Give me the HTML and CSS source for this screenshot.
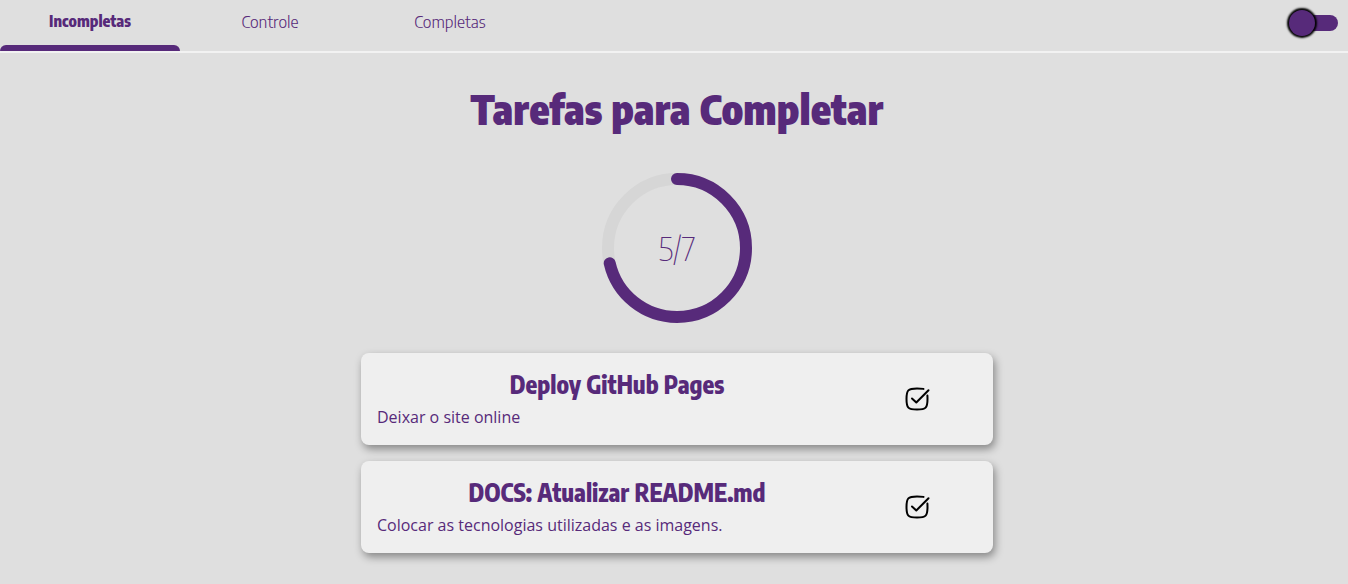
FILE: index.html
```html
<!DOCTYPE html>
<html lang="pt-BR">
<head>
<meta charset="utf-8">
<meta name="viewport" content="width=device-width, initial-scale=1">
<title>Tarefas</title>
<link rel="stylesheet" href="styles.css">
</head>
<body>
<header class="topbar">
  <nav class="tabs">
    <a class="tab tab-active" href="#incompletas" aria-current="page">Incompletas</a>
    <a class="tab" href="#controle">Controle</a>
    <a class="tab" href="#completas">Completas</a>
  </nav>
  <input class="switch" type="checkbox" role="switch" aria-label="Tema escuro">
</header>
<main class="content">
  <h1 class="title">Tarefas para Completar</h1>
  <div class="progress">
    <svg class="ring" viewBox="0 0 150 150" aria-hidden="true">
      <circle class="ring-track" cx="75" cy="75" r="69"/>
      <circle class="ring-value" cx="75" cy="75" r="69" pathLength="7" stroke-dasharray="5 7" transform="rotate(-90 75 75)"/>
    </svg>
    <span class="count">5/7</span>
  </div>
  <ul class="tasks">
    <li class="task">
      <div class="task-text">
        <h2 class="task-title">Deploy GitHub Pages</h2>
        <p class="task-info">Deixar o site online</p>
      </div>
      <button class="done" type="button" aria-label="Completar Deploy GitHub Pages">
        <svg class="check" viewBox="0 0 26 26" aria-hidden="true"><path d="M19.500 2.900C18 2.500 16.500 2.500 13 2.500C4 2.500 2.500 4 2.500 13S4 23.500 13 23.500S23.500 22 23.500 13Q23.500 11 23.400 9.500"/><path d="M8 12.500L12.300 16.500L24.500 4.300"/></svg>
      </button>
    </li>
    <li class="task">
      <div class="task-text">
        <h2 class="task-title">DOCS: Atualizar README.md</h2>
        <p class="task-info">Colocar as tecnologias utilizadas e as imagens.</p>
      </div>
      <button class="done" type="button" aria-label="Completar DOCS: Atualizar README.md">
        <svg class="check" viewBox="0 0 26 26" aria-hidden="true"><path d="M19.500 2.900C18 2.500 16.500 2.500 13 2.500C4 2.500 2.500 4 2.500 13S4 23.500 13 23.500S23.500 22 23.500 13Q23.500 11 23.400 9.500"/><path d="M8 12.500L12.300 16.500L24.500 4.300"/></svg>
      </button>
    </li>
  </ul>
</main>
</body>
</html>
```
FILE: styles.css
```css
* {
  box-sizing: border-box;
  margin: 0;
  padding: 0;
}

body {
  background: #dfdfdf;
  color: #572a7a;
  font-family: "Encode Sans Condensed", "Open Sans", sans-serif;
  font-size: 16px;
}

.topbar {
  display: flex;
  align-items: flex-start;
  justify-content: space-between;
  border-bottom: 2px solid #f2f2f2;
}

.tabs {
  display: flex;
}

.tab {
  width: 180px;
  padding-top: 9px;
  color: inherit;
  font-family: "Encode Sans Semi Condensed", "Open Sans", sans-serif;
  font-size: 17px;
  font-weight: 300;
  line-height: 24px;
  text-align: center;
  text-decoration: none;
}

.tab::after {
  content: "";
  display: block;
  height: 6px;
  margin-top: 12px;
  border-radius: 6px 6px 0 0;
}

.tab-active {
  font-family: "Encode Sans Condensed", "Open Sans", sans-serif;
  font-size: 16px;
  font-weight: 800;
}

.tab-active::after {
  background: #572a7a;
}

.switch {
  appearance: none;
  display: flex;
  align-items: center;
  width: 48px;
  height: 16px;
  margin: 15px 10px 0 0;
  border-radius: 8px;
  background: #572a7a;
}

.switch::before {
  content: "";
  width: 26px;
  height: 26px;
  margin-left: -1px;
  border-radius: 50%;
  background: #572a7a;
  box-shadow: 0 0 2px 2px #000;
}

.switch:checked::before {
  margin-left: 23px;
}

.content {
  display: flex;
  flex-direction: column;
  align-items: center;
  padding: 32px 10px 30px 16px;
}

.title {
  font-size: 41px;
  font-weight: 900;
  line-height: 48px;
}

.progress {
  display: grid;
  place-items: center;
  margin-top: 40px;
}

.ring,
.count {
  grid-area: 1 / 1;
}

.ring {
  width: 150px;
  height: 150px;
}

.ring circle {
  fill: none;
  stroke-width: 12;
}

.ring-track {
  stroke: #d6d6d6;
}

.ring .ring-value {
  stroke: #572a7a;
  stroke-linecap: round;
}

.count {
  font-family: "Encode Sans Semi Condensed", "Open Sans", sans-serif;
  font-size: 32px;
  font-weight: 100;
}

.tasks {
  display: flex;
  flex-direction: column;
  gap: 16px;
  width: 100%;
  max-width: 632px;
  margin-top: 30px;
  list-style: none;
}

.task {
  display: flex;
  align-items: center;
  padding: 16px;
  border-radius: 8px;
  background: #efefef;
  box-shadow: 2px 4px 8px rgba(0, 0, 0, 0.4);
}

.task-text {
  flex: 4;
}

.task-title {
  font-size: 24px;
  font-weight: 800;
  line-height: 30px;
  text-align: center;
}

.task-info {
  padding: 8px 0 2px;
  font-family: "Open Sans", sans-serif;
  font-size: 16px;
  line-height: 20px;
}

.done {
  flex: 1;
  border: 0;
  background: none;
}

.check {
  display: block;
  width: 26px;
  height: 26px;
  margin: 0 auto;
  fill: none;
  stroke: #000;
  stroke-width: 2;
  stroke-linecap: round;
  stroke-linejoin: round;
}
```
